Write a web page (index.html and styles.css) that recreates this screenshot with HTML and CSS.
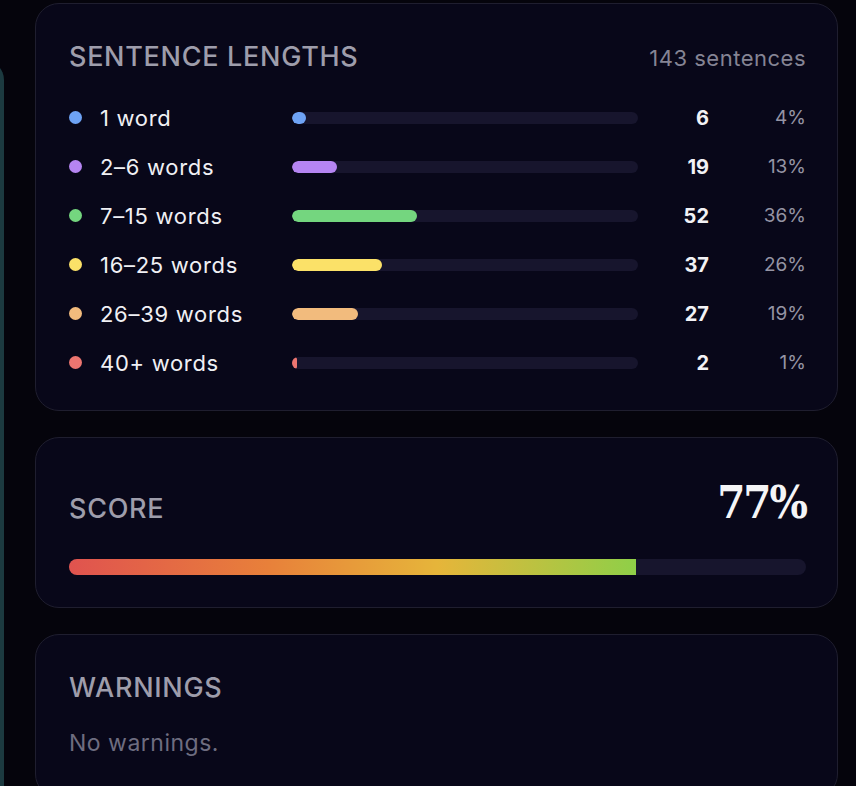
FILE: index.html
```html
<!DOCTYPE html>
<html lang="en">
<head>
    <meta charset="UTF-8">
    <meta name="viewport" content="width=device-width, initial-scale=1.0">
    <title>Sentence stats</title>
    <link rel="stylesheet" href="styles.css">
</head>
<body>
    <div class="layout">
        <div class="editor-edge"></div>

        <main class="stats">
            <section class="card">
                <div class="card-head">
                    <h2>Sentence lengths</h2>
                    <span class="meta">143 sentences</span>
                </div>
                <div class="lengths">
                    <div class="row">
                        <span class="label"><i class="dot c-blue"></i>1 word</span>
                        <span class="track"><span class="fill c-blue" style="width: 4%"></span></span>
                        <span class="count">6</span>
                        <span class="pct">4%</span>
                    </div>
                    <div class="row">
                        <span class="label"><i class="dot c-purple"></i>2–6 words</span>
                        <span class="track"><span class="fill c-purple" style="width: 13%"></span></span>
                        <span class="count">19</span>
                        <span class="pct">13%</span>
                    </div>
                    <div class="row">
                        <span class="label"><i class="dot c-green"></i>7–15 words</span>
                        <span class="track"><span class="fill c-green" style="width: 36%"></span></span>
                        <span class="count">52</span>
                        <span class="pct">36%</span>
                    </div>
                    <div class="row">
                        <span class="label"><i class="dot c-yellow"></i>16–25 words</span>
                        <span class="track"><span class="fill c-yellow" style="width: 26%"></span></span>
                        <span class="count">37</span>
                        <span class="pct">26%</span>
                    </div>
                    <div class="row">
                        <span class="label"><i class="dot c-orange"></i>26–39 words</span>
                        <span class="track"><span class="fill c-orange" style="width: 19%"></span></span>
                        <span class="count">27</span>
                        <span class="pct">19%</span>
                    </div>
                    <div class="row">
                        <span class="label"><i class="dot c-red"></i>40+ words</span>
                        <span class="track"><span class="fill c-red" style="width: 1%"></span></span>
                        <span class="count">2</span>
                        <span class="pct">1%</span>
                    </div>
                </div>
            </section>

            <section class="card score-card">
                <div class="card-head score-head">
                    <h2>Score</h2>
                    <span class="score">77%</span>
                </div>
                <div class="score-track"><div class="score-fill" style="width: 77%"></div></div>
            </section>

            <section class="card warn-card">
                <h2>Warnings</h2>
                <p class="empty">No warnings.</p>
            </section>
        </main>
    </div>
</body>
</html>
```

FILE: styles.css
```css
body {
    margin: 0;
    padding: 0;
    background-color: #05040c;
    color: #f2f2f5;
    font-family: Inter, "Open Sans", sans-serif;
    overflow: hidden;
}
.layout {
    display: flex;
    align-items: flex-start;
    gap: 31px;
    height: 786px;
}
.editor-edge {
    width: 40px;
    margin-left: -36px;
    margin-top: 60px;
    height: 800px;
    background-color: #1c3a40;
    border-radius: 22px;
    flex-shrink: 0;
}
.stats {
    width: 803px;
    display: flex;
    flex-direction: column;
    gap: 26px;
    margin-top: 3px;
}
.card {
    background-color: #080719;
    border: 1px solid #1f1e2f;
    border-radius: 24px;
    padding: 0 31px 0 33px;
}
.card h2 {
    margin: 0;
    font-size: 27px;
    line-height: 30px;
    font-weight: 500;
    letter-spacing: 0.7px;
    text-transform: uppercase;
    color: #9e9dab;
}
.card-head {
    display: flex;
    justify-content: space-between;
    align-items: baseline;
    padding-top: 38px;
}
.meta {
    font-size: 22px;
    letter-spacing: 0.5px;
    color: #858494;
}
.lengths {
    padding: 21px 0 23px;
}
.row {
    display: grid;
    grid-template-columns: 223px 346px 71px 97px;
    align-items: center;
    height: 49px;
}
.label {
    display: flex;
    align-items: center;
    font-size: 22px;
    letter-spacing: 0.7px;
    color: #f0f0f4;
}
.dot {
    width: 13px;
    height: 13px;
    border-radius: 50%;
    margin-right: 18px;
    flex-shrink: 0;
}
.track {
    height: 12px;
    border-radius: 6px;
    background-color: #17152d;
    overflow: hidden;
}
.fill {
    display: block;
    height: 100%;
    min-width: 5px;
    border-radius: 6px;
}
.count {
    text-align: right;
    font-weight: 700;
    font-size: 20px;
}
.pct {
    text-align: right;
    font-size: 19px;
    color: #9594a4;
}
.c-blue { background-color: #6ea3f5; }
.c-purple { background-color: #b585f2; }
.c-green { background-color: #74d67f; }
.c-yellow { background-color: #fbe168; }
.c-orange { background-color: #f2bb7d; }
.c-red { background-color: #ec7570; }

.score-card {
    padding-bottom: 32px;
}
.score-head {
    padding-top: 42px;
}
.score {
    font-family: "DejaVu Serif", serif;
    font-stretch: condensed;
    font-weight: 700;
    font-size: 45px;
    line-height: 45px;
    letter-spacing: -2px;
    color: #f5f5f7;
}
.score-track {
    margin-top: 34px;
    height: 16px;
    border-radius: 8px;
    background-color: #17152d;
    overflow: hidden;
}
.score-fill {
    height: 100%;
    background: linear-gradient(90deg, #e0534f 0%, #e8803a 35%, #e6b53a 65%, #8fcf48 100%);
}

.warn-card {
    padding-top: 38px;
    padding-bottom: 40px;
}
.empty {
    margin: 26px 0 0;
    font-size: 23px;
    letter-spacing: 0.5px;
    color: #6e6d80;
}
```
